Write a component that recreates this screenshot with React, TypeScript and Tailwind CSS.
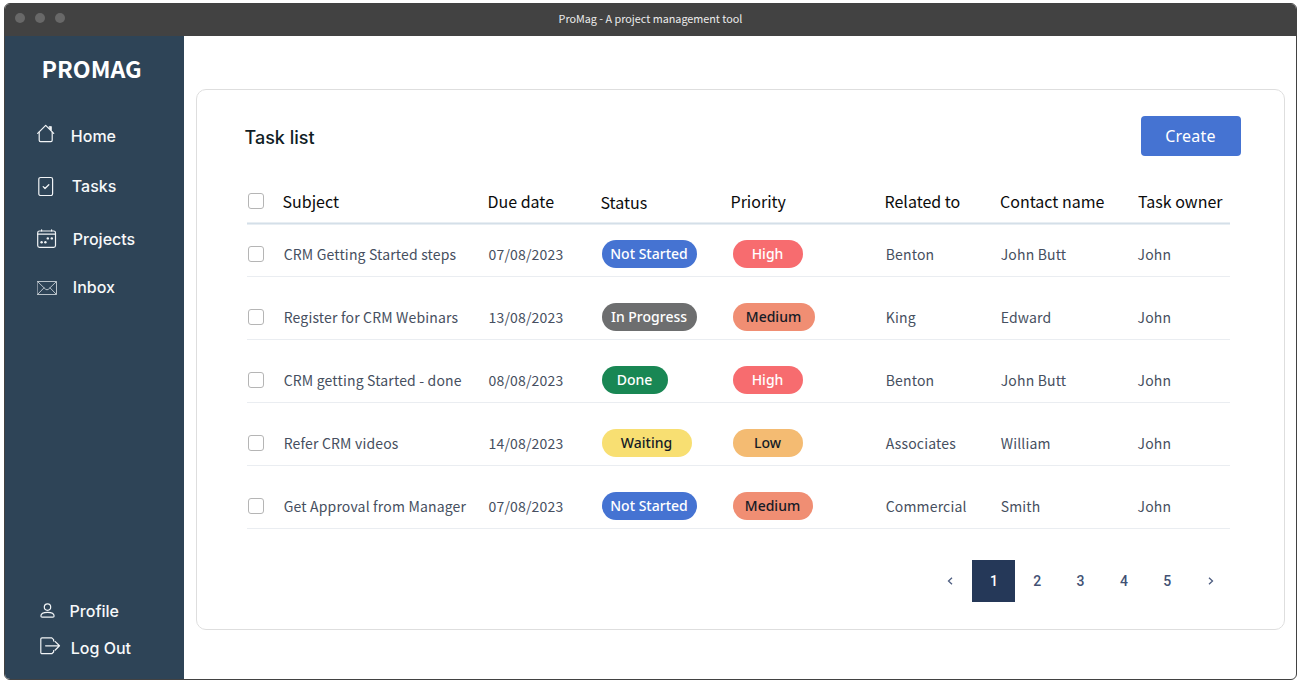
import type { ReactNode } from "react";

const cols =
  "grid grid-cols-[36px_205px_113px_130px_154px_115px_137px_93px] w-[983px]";
const sourceFont = "font-['Noto_Sans_CJK_SC','Noto_Sans',sans-serif]";

type Pill = { label: string; style: string };
type Task = {
  subject: string;
  due: string;
  status: Pill;
  priority: Pill;
  related: string;
  contact: string;
  owner: string;
};

const notStarted: Pill = { label: "Not Started", style: "w-[95px] bg-[#4573d2] text-white" };
const high: Pill = { label: "High", style: "w-[70px] bg-[#f76c6f] text-white" };

const tasks: Task[] = [
  { subject: "CRM Getting Started steps", due: "07/08/2023", status: notStarted, priority: high, related: "Benton", contact: "John Butt", owner: "John" },
  { subject: "Register for CRM Webinars", due: "13/08/2023", status: { label: "In Progress", style: "w-[95px] bg-[#6d6e6f] text-white" }, priority: { label: "Medium", style: "w-[82px] bg-[#f08e73] text-[#151b26]" }, related: "King", contact: "Edward", owner: "John" },
  { subject: "CRM getting Started - done", due: "08/08/2023", status: { label: "Done", style: "w-[66px] bg-[#198754] text-white" }, priority: high, related: "Benton", contact: "John Butt", owner: "John" },
  { subject: "Refer CRM videos", due: "14/08/2023", status: { label: "Waiting", style: "w-[90px] bg-[#f8df72] text-[#151b26]" }, priority: { label: "Low", style: "w-[70px] bg-[#f4bb72] text-[#151b26]" }, related: "Associates", contact: "William", owner: "John" },
  { subject: "Get Approval from Manager", due: "07/08/2023", status: notStarted, priority: { label: "Medium", style: "w-[80px] bg-[#f08e73] text-[#151b26]" }, related: "Commercial", contact: "Smith", owner: "John" },
];

function Badge({ pill }: { pill: Pill }) {
  return (
    <span
      className={`flex h-7 items-center justify-center rounded-full pr-px font-['Noto_Sans',sans-serif] text-[14px] leading-7 font-medium whitespace-nowrap ${pill.style}`}
    >
      {pill.label}
    </span>
  );
}

function Checkbox() {
  return <span className="ml-px block size-4 rounded-[3px] border border-[#b5b5b5] bg-white" />;
}

function Svg({ w, h, children, className = "" }: { w: number; h: number; children: ReactNode; className?: string }) {
  return (
    <svg
      width={w}
      height={h}
      viewBox={`0 0 ${w} ${h}`}
      fill="none"
      stroke="#f1f4f6"
      strokeWidth="1.2"
      strokeLinecap="round"
      strokeLinejoin="round"
      className={`shrink-0 ${className}`}
    >
      {children}
    </svg>
  );
}

function HomeIcon() {
  return (
    <Svg w={20} h={20}>
      <path d="M0.7 9.4 8.7 1.4 16.7 9.4" />
      <path d="M2.2 8v8.3a1.3 1.3 0 0 0 1.3 1.3h10.4a1.3 1.3 0 0 0 1.3-1.3V8" />
      <path d="M12.4 2.6h2v3.8l-2-2z" fill="#f1f4f6" strokeWidth="0.8" />
    </Svg>
  );
}

function TaskIcon() {
  return (
    <Svg w={20} h={20}>
      <rect x="1.8" y="1.5" width="13.8" height="18" rx="1.8" />
      <path d="m6.2 10.6 1.8 1.9 3.8-3.7" strokeWidth="1.3" />
    </Svg>
  );
}

function CalendarIcon() {
  return (
    <Svg w={20} h={20}>
      <rect x="0.7" y="2" width="17.8" height="16.4" rx="1.8" />
      <path d="M0.7 5.2h17.8M4.6 0.8V2M14.6 0.8V2" />
      <g fill="#f1f4f6" stroke="none">
        <circle cx="4.6" cy="13.2" r="1.2" />
        <circle cx="8.4" cy="13.2" r="1.2" />
        <circle cx="10.8" cy="9.4" r="1.2" />
        <circle cx="14.8" cy="9.4" r="1.2" />
      </g>
    </Svg>
  );
}

function MailIcon() {
  return (
    <Svg w={20} h={14} className="mt-px opacity-80">
      <rect x="0.5" y="0.5" width="19" height="13" strokeWidth="0.9" />
      <path d="m0.9 0.9 7.6 7.3q1.5 1.3 3 0l7.6-7.3M0.9 13.1l6-6.2M19.1 13.1l-6-6.2" strokeWidth="0.9" />
    </Svg>
  );
}

function ProfileIcon() {
  return (
    <Svg w={16} h={16}>
      <circle cx="7.5" cy="4.1" r="3.2" />
      <path d="M0.9 13C0.9 10.6 3.5 9.3 7.5 9.3s6.6 1.3 6.6 3.7c0 .8-.5 1.2-1.2 1.2H2.1c-.7 0-1.2-.4-1.2-1.2Z" />
    </Svg>
  );
}

function LogOutIcon() {
  return (
    <Svg w={21} h={18}>
      <path d="M13.6 4V2.6L11.8.9H2A1.2 1.2 0 0 0 .8 2.1v13.4a1.2 1.2 0 0 0 1.2 1.2h9.8l1.8-1.7v-1.4" />
      <path d="M5.6 8.8h13.8M15 4.4l4.5 4.4L15 13.2" />
    </Svg>
  );
}

function NavItem({ icon, label, className, labelClass }: { icon: ReactNode; label: string; className: string; labelClass: string }) {
  return (
    <a className={`flex h-6 items-center ${className}`}>
      <span className="flex w-[22px] shrink-0">{icon}</span>
      <span className={`leading-6 whitespace-nowrap ${labelClass}`}>{label}</span>
    </a>
  );
}

function Sidebar() {
  return (
    <aside className="flex w-[179px] shrink-0 flex-col bg-[#2e4457] font-['Inter',sans-serif] text-[16px] font-medium text-[#f7f9fa]">
      <h1 className={`mt-4 ml-[36.5px] h-8 text-[23.2px] leading-8 font-bold whitespace-nowrap text-white ${sourceFont}`}>
        PROMAG
      </h1>
      <nav className="mt-10 flex flex-col">
        <NavItem icon={<span className="-mt-[5px]"><HomeIcon /></span>} label="Home" className="ml-8" labelClass="ml-[11.8px]" />
        <NavItem icon={<TaskIcon />} label="Tasks" className="mt-[26px] ml-8" labelClass="ml-[12.8px]" />
        <NavItem icon={<CalendarIcon />} label="Projects" className="mt-[29px] ml-8" labelClass="ml-[13.8px]" />
        <NavItem icon={<MailIcon />} label="Inbox" className="mt-6 ml-8" labelClass="ml-[13.8px]" />
      </nav>
      <nav className="mt-auto mb-[19px] flex flex-col">
        <NavItem icon={<span className="-mt-px"><ProfileIcon /></span>} label="Profile" className="ml-[35px]" labelClass="ml-[7.6px]" />
        <NavItem icon={<span className="-mt-[4px]"><LogOutIcon /></span>} label="Log Out" className="mt-[13px] ml-[35px]" labelClass="ml-[8.8px]" />
      </nav>
    </aside>
  );
}

function TaskTable() {
  return (
    <div className={`mt-[24px] ml-[50px] ${sourceFont}`}>
      <div className={`${cols} h-[42px] items-center pb-px text-[16px] leading-6 whitespace-nowrap text-[#0b0b0b]`}>
        <Checkbox />
        <span className="-ml-[0.5px]">Subject</span>
        <span className="-ml-[0.5px]">Due date</span>
        <span className="-ml-[0.5px] pt-0.5">Status</span>
        <span className="-ml-[0.5px]">Priority</span>
        <span className="-ml-[0.5px]">Related to</span>
        <span>Contact name</span>
        <span className="pl-px">Task owner</span>
      </div>
      <div className="h-[3px] w-[983px] border-y border-[#e8eef3] bg-[#d4dfe8]" />
      <div className="mt-[7px] flex flex-col gap-[18px]">
        {tasks.map((task, i) => (
          <div key={i} className={`${cols} h-[45px] items-center border-b border-[#eaedf1] text-[14px] leading-6 tracking-[0.17px] whitespace-nowrap text-[#464f60]`}>
            <Checkbox />
            <span className="-mt-px pl-[0.7px]">{task.subject}</span>
            <span className="-mt-px pl-[0.5px]">{task.due}</span>
            <span className="pl-px tracking-normal"><Badge pill={task.status} /></span>
            <span className="flex pl-0.5 tracking-normal"><Badge pill={task.priority} /></span>
            <span className="-mt-px pl-[0.7px]">{task.related}</span>
            <span className="-mt-px pl-[0.7px]">{task.contact}</span>
            <span className="-mt-px pl-[0.5px]">{task.owner}</span>
          </div>
        ))}
      </div>
    </div>
  );
}

function Chevron({ d }: { d: string }) {
  return (
    <svg width="6" height="8" viewBox="0 0 6 8" fill="none" stroke="#4d5d80" strokeWidth="1.3">
      <path d={d} />
    </svg>
  );
}

function Pagination() {
  return (
    <div className="mt-[31px] mr-[52px] flex h-[42px] justify-end font-['Roboto',sans-serif] text-[14px] font-medium text-[#425174]">
      <button className="flex w-[43px] items-center justify-center pr-px"><Chevron d="M5 .7 1.5 4 5 7.3" /></button>
      {[1, 2, 3, 4, 5].map((n) => (
        <button
          key={n}
          className={`flex items-center justify-center ${n === 1 ? "w-[43px] bg-[#253858] text-white" : "w-[43.4px]"}`}
        >
          {n}
        </button>
      ))}
      <button className="flex w-[43px] items-center justify-center"><Chevron d="M1 .7 4.5 4 1 7.3" /></button>
    </div>
  );
}

export default function App() {
  return (
    <div className="h-[683px] w-[1299px] overflow-hidden bg-white pt-[3px] pl-1">
      <div className="flex h-[677px] w-[1293px] flex-col overflow-hidden rounded-[6px] border border-[#424242] bg-white">
        <header className="grid h-8 shrink-0 grid-cols-[1fr_auto_1fr] items-center bg-[#424242]">
          <div className="-mt-1 flex gap-[10px] pl-[10.4px]">
            <span className="size-[10px] rounded-full bg-[#686868]" />
            <span className="size-[10px] rounded-full bg-[#686868]" />
            <span className="size-[10px] rounded-full bg-[#686868]" />
          </div>
          <span className={`-mt-1 text-[10.8px] leading-4 text-[#ececec] ${sourceFont}`}>ProMag - A project management tool</span>
        </header>
        <div className="flex min-h-0 flex-1">
          <Sidebar />
          <main className="min-w-0 flex-1">
            <section className="mt-[53px] ml-3 h-[541px] w-[1089px] rounded-[10px] border border-[#dedede]">
              <div className="mt-[26px] mr-[43px] ml-12 flex h-10 items-center justify-between">
                <h2 className="-ml-[0.5px] pt-1 font-['Inter',sans-serif] text-[18px] leading-6 font-medium text-[#101d25]">Task list</h2>
                <button className="h-10 w-[100px] rounded-[4px] bg-[#4573d2] pr-px font-['Noto_Sans',sans-serif] text-[16px] leading-10 tracking-[0.2px] text-white">
                  Create
                </button>
              </div>
              <TaskTable />
              <Pagination />
            </section>
          </main>
        </div>
      </div>
    </div>
  );
}
